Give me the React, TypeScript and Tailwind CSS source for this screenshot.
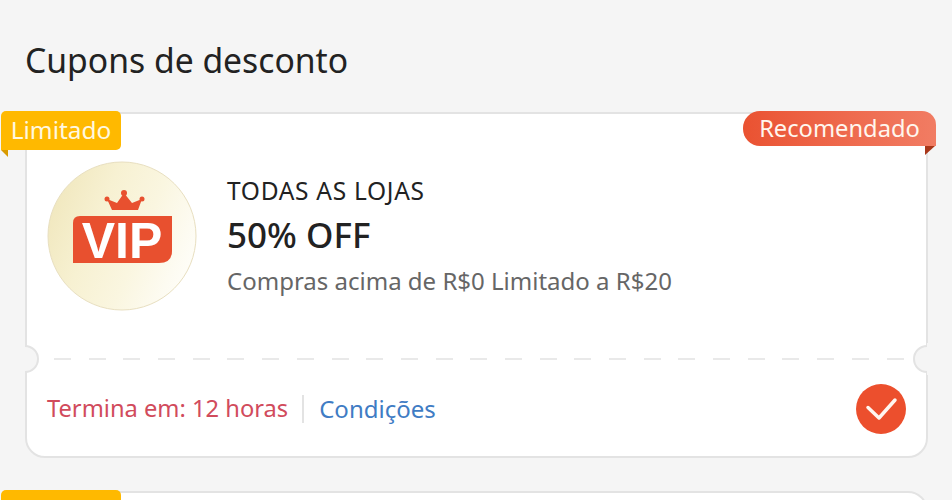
const dashes = Array.from({ length: 25 });

export default function App() {
  return (
    <div className="h-[500px] w-[952px] overflow-hidden bg-[#f5f5f5] font-['Noto_Sans',sans-serif]">
      <h1 className="pl-[25px] pt-[40px] text-[33.700px] font-normal leading-[41px] text-[#222222]">Cupons de desconto</h1>
      <div className="mt-[31px] flex flex-col gap-[33px]">
        <Card />
        <Card empty />
      </div>
    </div>
  );
}

function Notch({ side }: { side: "left" | "right" }) {
  return side === "left" ? (
    <>
      <div className="absolute left-[-16px] top-[231px] h-[28px] w-[28px] rounded-full border-2 border-[#e3e3e3] bg-[#f5f5f5]" />
      <div className="absolute left-[-17px] top-[229px] h-[32px] w-[15px] bg-[#f5f5f5]" />
    </>
  ) : (
    <>
      <div className="absolute right-[-15px] top-[231px] h-[28px] w-[28px] rounded-full border-2 border-[#e3e3e3] bg-[#f5f5f5]" />
      <div className="absolute right-[-16px] top-[229px] h-[32px] w-[15px] bg-[#f5f5f5]" />
    </>
  );
}

function Card({ empty }: { empty?: boolean }) {
  return (
    <div className="relative ml-[25px] h-[346px] w-[903px] rounded-[20px] border-2 border-[#e3e3e3] bg-white">
      <div className="absolute left-[-26px] top-[-3px] flex h-[39px] w-[120px] items-center justify-center rounded-[5px] rounded-bl-none bg-[#ffb900] text-[24.400px] text-[#fff8e0]">
        {empty ? "" : "Limitado"}
      </div>
      <div className="absolute left-[-26px] top-[36px] h-0 w-0 border-l-[7px] border-t-[7px] border-l-transparent border-t-[#d99a00]" />
      {!empty && (
        <>
          <div className="absolute right-[-10px] top-[-3px] flex h-[35px] w-[193px] items-center justify-center rounded-l-[17px] rounded-tr-[14px] bg-gradient-to-r from-[#ea5231] to-[#f17c63] text-[23.700px] text-[#fff6ee]">
            Recomendado
          </div>
          <div className="absolute right-[-9px] top-[32px] h-0 w-0 border-r-[10px] border-t-[9px] border-r-transparent border-t-[#a8371a]" />
          <div className="flex h-[244px] items-start gap-[30px] pl-[20px] pt-[47px]">
            <Vip />
            <div className="pt-[15px]">
              <div className="text-[24.500px] leading-[30px] tracking-[0.700px] text-[#222222]">TODAS AS LOJAS</div>
              <div className="mt-[9px] text-[35px] font-medium leading-[40px] text-[#222222]">50% OFF</div>
              <div className="mt-[11px] text-[24px] leading-[30px] text-[#666666]">Compras acima de R$0 Limitado a R$20</div>
            </div>
          </div>
          <div className="flex gap-[17.700px] pl-[27px]">
            {dashes.map((_, i) => (
              <span key={i} className="h-[2px] w-[17px] shrink-0 bg-[#e9e9e9]" />
            ))}
          </div>
          <div className="flex h-[97px] items-center px-[20px]">
            <span className="text-[23.700px] text-[#d14b5c]">Termina em: 12 horas</span>
            <span className="ml-[14px] mr-[15px] h-[28px] w-[2px] bg-[#e3e3e3]" />
            <span className="text-[24px] text-[#3f7cc4]">Condições</span>
            <svg className="ml-auto" width="50" height="50" viewBox="0 0 50 50">
              <circle cx="25" cy="25" r="25" fill="#ec4f2d" />
              <path d="M12 23.500 L23 34 L39 16" fill="none" stroke="#fff6f0" strokeWidth="3.500" strokeLinecap="round" strokeLinejoin="round" />
            </svg>
          </div>
          <Notch side="left" />
          <Notch side="right" />
        </>
      )}
    </div>
  );
}

function Vip() {
  return (
    <svg width="150" height="150" viewBox="0 0 150 150" className="shrink-0">
      <defs>
        <linearGradient id="gold" x1="0" y1="0.35" x2="1" y2="0.75">
          <stop offset="0" stopColor="#f1e8bf" />
          <stop offset="0.3" stopColor="#f7f1d2" />
          <stop offset="0.6" stopColor="#faf6e0" />
          <stop offset="0.85" stopColor="#fdfbf1" />
          <stop offset="1" stopColor="#fffefa" />
        </linearGradient>
      </defs>
      <circle cx="75" cy="75" r="74" fill="url(#gold)" stroke="#e8dfc0" />
      <path d="M60 38 L65 49 L91 49 L95 38 L85 42 L77 32 L70 42 Z" fill="#e8502f" />
      <circle cx="60" cy="38" r="2.500" fill="#e8502f" />
      <circle cx="77" cy="32" r="3" fill="#e8502f" />
      <circle cx="95" cy="38" r="2.500" fill="#e8502f" />
      <path d="M33 55 Q26 55 26 62 L26 102 L112 102 Q125 102 125 90 L125 55 Z" fill="#e8502f" />
      <text x="75" y="97" textAnchor="middle" fontFamily="'Liberation Sans',sans-serif" fontWeight="700" fontSize="50" fill="#fff">VIP</text>
    </svg>
  );
}
